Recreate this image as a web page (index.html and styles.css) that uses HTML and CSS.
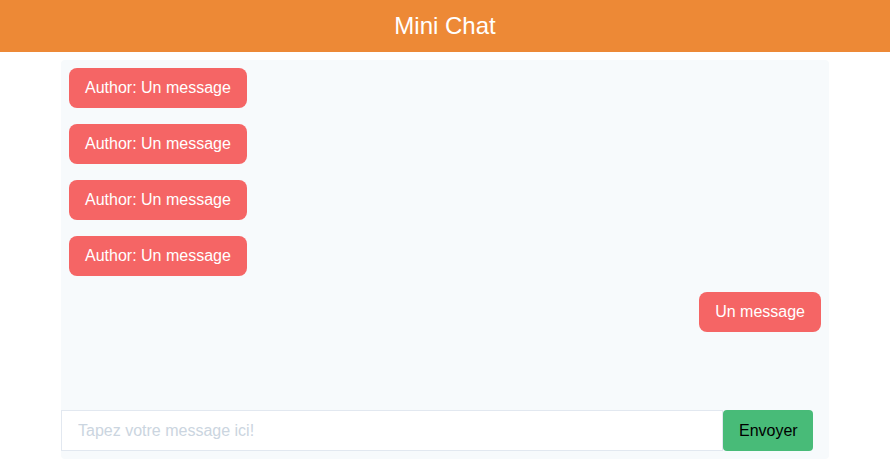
FILE: index.html
```html
<!DOCTYPE html>
<html lang="fr">
<head>
<meta charset="utf-8">
<title>Mini Chat</title>
<link rel="stylesheet" href="styles.css">
</head>
<body>
<header class="header"><h1 class="title">Mini Chat</h1></header>
<main class="chat">
  <div class="messages">
    <div class="msg">Author: Un message</div>
    <div class="msg">Author: Un message</div>
    <div class="msg">Author: Un message</div>
    <div class="msg">Author: Un message</div>
    <div class="msg mine">Un message</div>
  </div>
  <form class="composer">
    <input class="input" type="text" placeholder="Tapez votre message ici!">
    <button class="send" type="button">Envoyer</button>
  </form>
</main>
</body>
</html>
```
FILE: styles.css
```css
* { box-sizing: border-box; }
html, body { margin: 0; padding: 0; }
body {
  font-family: "Liberation Sans", Arial, sans-serif;
  background: #ffffff;
  color: #000;
}
.header {
  background: #ed8936;
  padding: 8px 0;
  text-align: center;
}
.title {
  margin: 0;
  font-size: 24px;
  line-height: 36px;
  font-weight: 400;
  color: #fff;
}
.chat {
  width: 768px;
  margin: 8px auto 0;
  height: 399px;
  background: #f7fafc;
  border-radius: 4px;
  display: flex;
  flex-direction: column;
}
.messages {
  padding: 8px;
  display: flex;
  flex-direction: column;
  align-items: flex-start;
  gap: 16px;
}
.msg {
  background: #f56565;
  color: #fff;
  font-size: 16px;
  line-height: 24px;
  padding: 8px 16px;
  border-radius: 8px;
}
.msg.mine { align-self: flex-end; }
.composer {
  margin-top: auto;
  display: flex;
  padding: 0 16px 8px 0;
}
.input {
  flex: 1;
  border: 1px solid #e2e8f0;
  background: #fff;
  font: inherit;
  font-size: 16px;
  line-height: 24px;
  padding: 8px 16px;
  height: 41px;
  outline: none;
}
.input::placeholder { color: #cbd5e0; }
.send {
  background: #48bb78;
  color: #000;
  border: none;
  border-radius: 4px;
  font: inherit;
  font-size: 16px;
  line-height: 24px;
  padding: 8px 16px;
  height: 41px;
  width: 90px;
}
```
